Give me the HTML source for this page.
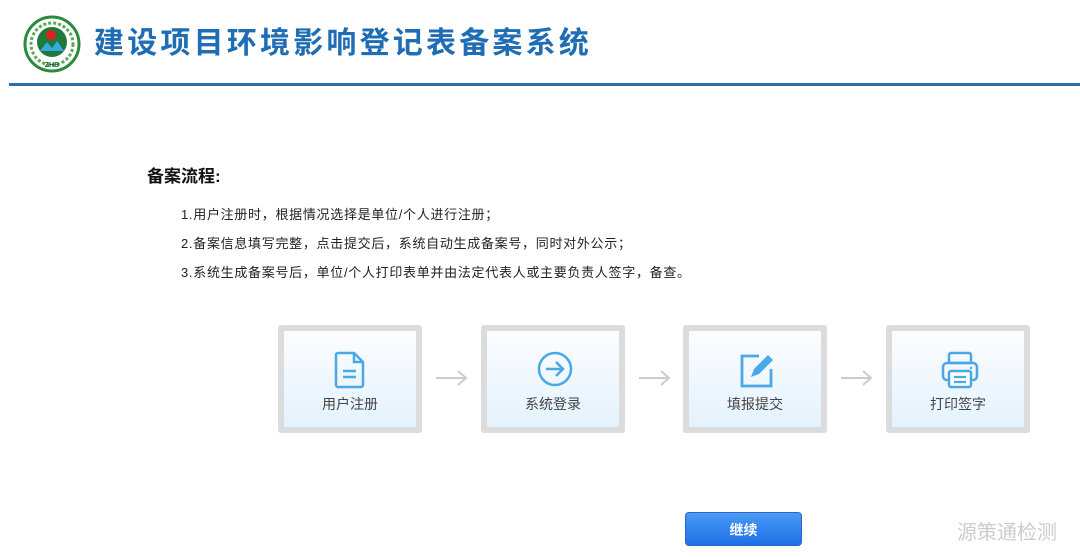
<!DOCTYPE html>
<html><head><meta charset="utf-8"><style>
body{margin:0;width:1080px;height:557px;background:#fff;position:relative;overflow:hidden;font-family:"Liberation Sans","Noto Sans CJK SC",sans-serif;}
.abs{position:absolute}
.title{left:94px;top:24px;font-size:30px;font-weight:bold;color:#1f6db4;letter-spacing:3.2px;white-space:nowrap;line-height:40px}
.line{left:9px;top:83px;width:1071px;height:3px;background:#2a6fb0}
.h{left:147px;top:162px;font-size:17px;font-weight:bold;color:#111}
.t{left:181px;font-size:13px;color:#222;white-space:nowrap;letter-spacing:0.7px}
.box{width:132px;height:96px;border:6px solid #dcdcdc;border-radius:3px;background:linear-gradient(#fbfdff,#e4f2fd);top:325px}
.box .lbl{position:absolute;top:63px;left:0;width:100%;text-align:center;font-size:14px;color:#444}
.box svg{position:absolute;left:48px;top:19px}
.arr{top:368px;width:36px;height:20px}
.btn{left:685px;top:512px;width:117px;height:34px;border-radius:4px;background:linear-gradient(#4a9af5,#1f6fe6);border:1px solid #2a66c8;color:#fff;font-size:14px;font-weight:bold;text-align:center;line-height:34px;box-sizing:border-box}
.wm{left:957px;top:516px;font-size:20px;color:#ccc}
</style></head><body>
<svg class="abs" style="left:23px;top:15px" width="58" height="58" viewBox="0 0 58 58">
<circle cx="29" cy="29" r="27" fill="#fff" stroke="#2c8a3c" stroke-width="3"/>
<circle cx="29" cy="29" r="21" fill="none" stroke="#5aaa5a" stroke-width="3" stroke-dasharray="3 2"/>
<circle cx="29" cy="27" r="15" fill="#1e7a3a"/>
<circle cx="28" cy="20" r="5" fill="#e02020"/>
<path d="M17 36 L24 27 L29 33 L34 26 L41 36Z" fill="#38a8e0"/>
<text x="29" y="52" font-size="7" font-weight="bold" text-anchor="middle" fill="#1e6a2a" font-family="Liberation Sans">ZHB</text>
</svg>
<div class="abs title">建设项目环境影响登记表备案系统</div>
<div class="abs line"></div>
<div class="abs h">备案流程:</div>
<div class="abs t" style="top:204px">1.用户注册时，根据情况选择是单位/个人进行注册；</div>
<div class="abs t" style="top:233px">2.备案信息填写完整，点击提交后，系统自动生成备案号，同时对外公示；</div>
<div class="abs t" style="top:262px">3.系统生成备案号后，单位/个人打印表单并由法定代表人或主要负责人签字，备查。</div>

<div class="abs box" style="left:278px"><svg width="36" height="40" viewBox="0 0 36 40"><path d="M6 3h16l9 9v23a2 2 0 0 1-2 2H6a2 2 0 0 1-2-2V5a2 2 0 0 1 2-2z" fill="none" stroke="#4aa8e6" stroke-width="2.5"/><path d="M22 3v9h9" fill="none" stroke="#4aa8e6" stroke-width="2.5"/><path d="M11 21h13M11 27h13" stroke="#4aa8e6" stroke-width="2.5"/></svg><div class="lbl">用户注册</div></div>
<svg class="abs arr" style="left:434px" viewBox="0 0 36 20"><path d="M2 10h30M24 3l8 7-8 7" fill="none" stroke="#ccc" stroke-width="2"/></svg>
<div class="abs box" style="left:481px"><svg width="40" height="40" viewBox="0 0 40 40"><circle cx="20" cy="19" r="16" fill="none" stroke="#4aa8e6" stroke-width="2.5"/><path d="M11 19h17M21 12l7 7-7 7" fill="none" stroke="#4aa8e6" stroke-width="2.5"/></svg><div class="lbl">系统登录</div></div>
<svg class="abs arr" style="left:637px" viewBox="0 0 36 20"><path d="M2 10h30M24 3l8 7-8 7" fill="none" stroke="#ccc" stroke-width="2"/></svg>
<div class="abs box" style="left:683px"><svg width="40" height="40" viewBox="0 0 40 40"><path d="M22 6H5v30h29V19" fill="none" stroke="#4aa8e6" stroke-width="2.8"/><path d="M14 27l3-8 14-14 5 5-14 14z" fill="#4aa8e6"/></svg><div class="lbl">填报提交</div></div>
<svg class="abs arr" style="left:839px" viewBox="0 0 36 20"><path d="M2 10h30M24 3l8 7-8 7" fill="none" stroke="#ccc" stroke-width="2"/></svg>
<div class="abs box" style="left:886px"><svg width="40" height="40" viewBox="0 0 40 40"><rect x="9" y="3" width="22" height="10" rx="2" fill="none" stroke="#4aa8e6" stroke-width="2.5"/><rect x="3" y="13" width="34" height="17" rx="4" fill="none" stroke="#4aa8e6" stroke-width="2.5"/><rect x="9" y="21" width="22" height="16" rx="2" fill="#fff" stroke="#4aa8e6" stroke-width="2.5"/><path d="M14 27h12M14 32h12" stroke="#4aa8e6" stroke-width="2.2"/><circle cx="31" cy="18" r="1.2" fill="#4aa8e6"/></svg><div class="lbl">打印签字</div></div>

<div class="abs btn">继续</div>
<div class="abs wm">源策通检测</div>
</body></html>
